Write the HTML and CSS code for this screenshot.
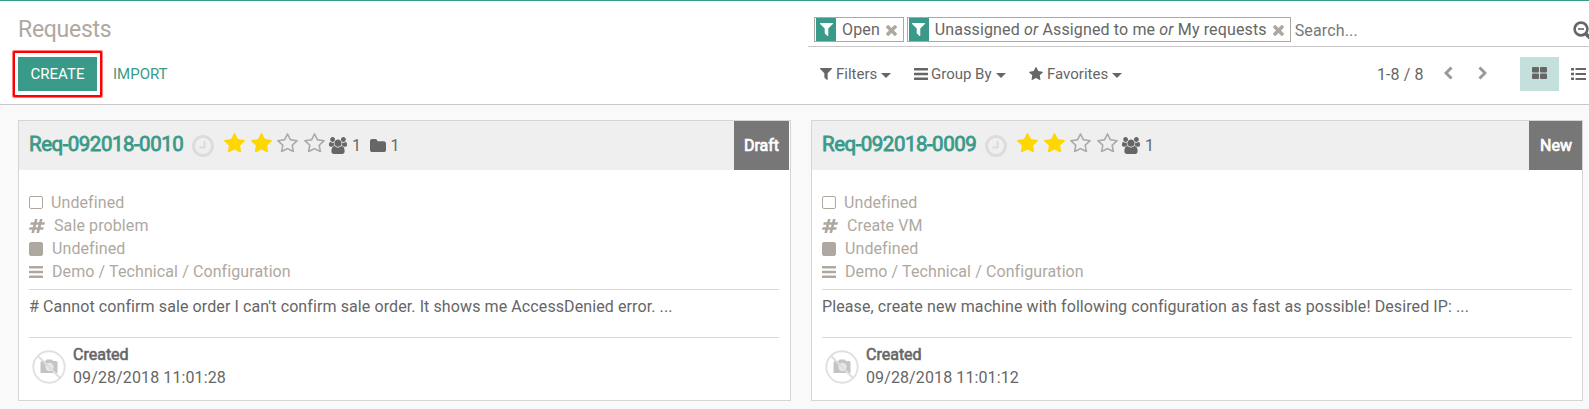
FILE: index.html
```html
<!DOCTYPE html>
<html lang="en">
<head>
<meta charset="utf-8">
<title>Requests</title>
<link rel="stylesheet" href="styles.css">
</head>
<body>
<svg class="sprite" aria-hidden="true">
  <symbol id="filter" viewBox="192 256 1408 1408" preserveAspectRatio="none"><path d="M1595 295q17 41-14 70l-493 493v742q0 42-39 59-13 5-25 5-27 0-45-19l-256-256q-19-19-19-45v-486l-493-493q-31-29-14-70 17-39 59-39h1280q42 0 59 39z"/></symbol>
  <symbol id="star" viewBox="64 32 1664 1588" preserveAspectRatio="none"><path d="M1728 647q0 22-26 48l-363 354 86 500q1 7 1 20 0 21-10.500 35.500t-30.500 14.500q-19 0-40-12l-449-236-449 236q-22 12-40 12-21 0-31.500-14.500t-10.500-35.500q0-6 2-20l86-500-364-354q-25-27-25-48 0-37 56-46l502-73 225-455q19-41 49-41t49 41l225 455 502 73q56 9 56 46z"/></symbol>
  <symbol id="star-o" viewBox="64 32 1664 1588" preserveAspectRatio="none"><path d="M1201 1004l306-297-422-62-189-382-189 382-422 62 306 297-73 421 378-199 377 199zm527-357q0 22-26 48l-363 354 86 500q1 7 1 20 0 50-41 50-19 0-40-12l-449-236-449 236q-22 12-40 12-21 0-31.500-14.500t-10.500-35.500q0-6 2-20l86-500-364-354q-25-27-25-48 0-37 56-46l502-73 225-455q19-41 49-41t49 41l225 455 502 73q56 9 56 46z"/></symbol>
  <symbol id="times" viewBox="302 366 1188 1188"><path d="M1490 1322q0 40-28 68l-136 136q-28 28-68 28t-68-28l-294-294-294 294q-28 28-68 28t-68-28l-136-136q-28-28-28-68t28-68l294-294-294-294q-28-28-28-68t28-68l136-136q28-28 68-28t68 28l294 294 294-294q28-28 68-28t68 28l136 136q28 28 28 68t-28 68l-294 294 294 294q28 28 28 68z"/></symbol>
  <symbol id="users" viewBox="0 0 1920 1792"><path d="M593 896q-162 5-265 128h-134q-82 0-138-40.500t-56-118.500q0-353 124-353 6 0 43.500 21t97.500 42.500 119 21.500q67 0 133-23-5 37-5 66 0 139 81 256zm1071 637q0 120-73 189.500t-194 69.500h-874q-121 0-194-69.500t-73-189.500q0-53 3.500-103.500t14-109 26.500-108.500 43-97.500 62-81 85.500-53.500 111.500-20q10 0 43 21.500t73 48 107 48 135 21.500 135-21.500 107-48 73-48 43-21.500q61 0 111.500 20t85.500 53.500 62 81 43 97.500 26.500 108.500 14 109 3.500 103.500zm-1024-1277q0 106-75 181t-181 75-181-75-75-181 75-181 181-75 181 75 75 181zm704 384q0 159-112.500 271.500t-271.500 112.500-271.500-112.500-112.500-271.500 112.500-271.500 271.500-112.500 271.500 112.500 112.500 271.500zm576 225q0 78-56 118.500t-138 40.500h-134q-103-123-265-128 81-117 81-256 0-29-5-66 66 23 133 23 59 0 119-21.500t97.500-42.500 43.500-21q124 0 124 353zm-128-609q0 106-75 181t-181 75-181-75-75-181 75-181 181-75 181 75 75 181z"/></symbol>
  <symbol id="folder" viewBox="64 128 1664 1408" preserveAspectRatio="none"><path d="M1728 608v704q0 92-66 158t-158 66h-1216q-92 0-158-66t-66-158v-960q0-92 66-158t158-66h320q92 0 158 66t66 158v32h672q92 0 158 66t66 158z"/></symbol>
  <symbol id="hash" viewBox="32 128 1728 1536" preserveAspectRatio="none"><path d="M991 1024l64-256h-254l-64 256h254zm768-504l-56 224q-7 24-31 24h-327l-64 256h311q15 0 25 12 10 14 6 28l-56 224q-5 24-31 24h-327l-81 328q-7 24-31 24h-224q-16 0-26-12-9-12-6-28l78-312h-254l-81 328q-7 24-31 24h-225q-15 0-25-12-9-12-6-28l78-312h-311q-15 0-25-12-9-12-6-28l56-224q7-24 31-24h327l64-256h-311q-15 0-25-12-10-14-6-28l56-224q5-24 31-24h327l81-328q7-24 32-24h224q15 0 25 12 9 12 6 28l-78 312h254l81-328q7-24 32-24h224q15 0 25 12 9 12 6 28l-78 312h311q15 0 25 12 9 12 6 28z"/></symbol>
  <symbol id="bars" viewBox="0 0 14 12" preserveAspectRatio="none"><path d="M.5 0h13a.5.5 0 0 1 .5.5v1.400a.5.5 0 0 1-.5.5H.5a.5.5 0 0 1-.5-.5V.5A.5.5 0 0 1 .5 0zM.5 4.800h13a.5.5 0 0 1 .5.5v1.400a.5.5 0 0 1-.5.5H.5a.5.5 0 0 1-.5-.5V5.300a.5.5 0 0 1 .5-.5zM.5 9.600h13a.5.5 0 0 1 .5.5v1.400a.5.5 0 0 1-.5.5H.5a.5.5 0 0 1-.5-.5v-1.400a.5.5 0 0 1 .5-.5z"/></symbol>
  <symbol id="clock" viewBox="0 0 22 22"><circle cx="11" cy="11" r="9.500" fill="none" stroke="currentColor" stroke-width="3"/><path d="M12.500 6v6.500h-5" fill="none" stroke="currentColor" stroke-width="2"/></symbol>
  <symbol id="camera" viewBox="0 0 34 34"><path d="M8.500 12.500q0-1.500 1.500-1.500h3.500l1-1.500h5.500l1 1.500h3q1.500 0 1.500 1.500v10.500h-17z" fill="#c4c4c4"/><circle cx="17.500" cy="17" r="4.200" fill="#e6e6e6"/><circle cx="17" cy="17" r="15.700" fill="none" stroke="#e0e0e0" stroke-width="1.900"/><path d="M6 6l22 22" stroke="#dedede" stroke-width="2"/></symbol>
</svg>

<header class="panel">
  <div class="left">
    <h1 class="title">Requests</h1>
    <div class="actions">
      <div class="highlight"><button class="create">CREATE</button></div>
      <span class="import">IMPORT</span>
    </div>
  </div>
  <div class="right">
    <div class="search">
      <div class="facet">
        <span class="facet-icon"><svg><use href="#filter"/></svg></span>
        <span class="facet-text">Open</span>
        <svg class="remove"><use href="#times"/></svg>
      </div>
      <div class="facet">
        <span class="facet-icon"><svg><use href="#filter"/></svg></span>
        <span class="facet-text">Unassigned <i>or</i> Assigned to me <i>or</i> My requests</span>
        <svg class="remove"><use href="#times"/></svg>
      </div>
      <span class="placeholder">Search...</span>
      <svg class="zoom" viewBox="0 0 17 18"><circle cx="8" cy="8" r="6.400" fill="none" stroke="currentColor" stroke-width="2.600"/><path d="M5 8h6" stroke="currentColor" stroke-width="1.600"/><path d="M12.500 12.500l5 5" stroke="currentColor" stroke-width="3.600"/></svg>
    </div>
    <div class="tools">
      <span class="menu filters"><svg class="i-filter"><use href="#filter"/></svg>Filters<b class="caret"></b></span>
      <span class="menu groups"><svg class="i-bars"><use href="#bars"/></svg>Group By<b class="caret"></b></span>
      <span class="menu favs"><svg class="i-star"><use href="#star"/></svg>Favorites<b class="caret"></b></span>
      <span class="pager">1-8 / 8</span>
      <svg class="chev prev" viewBox="0 0 9 14"><path d="M7.500 1.500L2 7l5.500 5.500"/></svg>
      <svg class="chev" viewBox="0 0 9 14"><path d="M1.500 1.500L7 7l-5.500 5.500"/></svg>
      <span class="view active"><svg class="i-grid" viewBox="0 0 15 12"><rect width="7" height="5.500" rx="1"/><rect x="8" width="7" height="5.500" rx="1"/><rect y="6.500" width="7" height="5.500" rx="1"/><rect x="8" y="6.500" width="7" height="5.500" rx="1"/></svg></span>
      <svg class="i-list" viewBox="0 0 15 12"><path d="M0 0h3v2.400H0zM4.500 0H15v2H4.500zM0 4.800h3v2.400H0zM4.500 5H15v2H4.500zM0 9.600h3V12H0zM4.500 10H15v2H4.500z"/></svg>
    </div>
  </div>
</header>

<main class="board">
  <article class="card first">
    <div class="head">
      <span class="name">Req-092018-0010</span>
      <svg class="clock"><use href="#clock"/></svg>
      <span class="stars"><svg class="on"><use href="#star"/></svg><svg class="on"><use href="#star"/></svg><svg><use href="#star-o"/></svg><svg><use href="#star-o"/></svg></span>
      <svg class="users"><use href="#users"/></svg><span class="count">1</span>
      <svg class="folder"><use href="#folder"/></svg><span class="count">1</span>
      <span class="status">Draft</span>
    </div>
    <div class="body">
      <ul class="meta">
        <li><span class="box"></span>Undefined</li>
        <li><svg class="hash"><use href="#hash"/></svg>Sale problem</li>
        <li><span class="box full"></span>Undefined</li>
        <li><svg class="lines"><use href="#bars"/></svg>Demo / Technical / Configuration</li>
      </ul>
      <p class="desc"># Cannot confirm sale order I can't confirm sale order. It shows me AccessDenied error. ...</p>
      <div class="foot">
        <svg class="avatar"><use href="#camera"/></svg>
        <div class="event"><span class="strong">Created</span><span>09/28/2018 11:01:28</span></div>
      </div>
    </div>
  </article>
  <article class="card">
    <div class="head">
      <span class="name">Req-092018-0009</span>
      <svg class="clock"><use href="#clock"/></svg>
      <span class="stars"><svg class="on"><use href="#star"/></svg><svg class="on"><use href="#star"/></svg><svg><use href="#star-o"/></svg><svg><use href="#star-o"/></svg></span>
      <svg class="users"><use href="#users"/></svg><span class="count">1</span>
      <span class="status new">New</span>
    </div>
    <div class="body">
      <ul class="meta">
        <li><span class="box"></span>Undefined</li>
        <li><svg class="hash"><use href="#hash"/></svg>Create VM</li>
        <li><span class="box full"></span>Undefined</li>
        <li><svg class="lines"><use href="#bars"/></svg>Demo / Technical / Configuration</li>
      </ul>
      <p class="desc">Please, create new machine with following configuration as fast as possible! Desired IP: ...</p>
      <div class="foot">
        <svg class="avatar"><use href="#camera"/></svg>
        <div class="event"><span class="strong">Created</span><span>09/28/2018 11:01:12</span></div>
      </div>
    </div>
  </article>
</main>
</body>
</html>
```
FILE: styles.css
```css
* { box-sizing: border-box; }
body { margin: 0; height: 409px; overflow: hidden; background: #f9f9f9; color: #666; font: 16px/23px Roboto, sans-serif; }
svg { flex: none; fill: currentColor; }
.sprite { position: absolute; width: 0; height: 0; }

.panel { display: flex; height: 105px; background: #fff; border-top: 1px solid #3a9a89; border-bottom: 1px solid #c8c8c8; }
.left { width: 808px; padding-left: 13px; }
.title { margin: 14px 0 0 5px; font-size: 23px; line-height: 30px; font-weight: 400; letter-spacing: -.28px; color: #afa8a0; }
.actions { display: flex; align-items: center; margin-top: 6px; gap: 11px; }
.highlight { padding: 4px 3px; border: 2px solid #f00; border-radius: 1px; box-shadow: 0 0 0 1px #ff8080; }
.create { display: block; width: 79px; height: 34px; padding: 0; border: 0; background: #3a9a89; color: #fff; font: 15px Roboto, sans-serif; }
.import { font-size: 15px; color: #3a9a89; }

.right { width: 781px; overflow: hidden; }
.search { display: flex; align-items: center; height: 46px; padding: 11px 0 0 6px; border-bottom: 1px solid #c8c8c8; }
.facet { display: flex; align-items: center; height: 25px; margin-right: 3px; padding-left: 1px; border: 1px solid #afa8a0; white-space: nowrap; }
.facet-icon { display: flex; align-items: center; justify-content: center; width: 20px; height: 23px; background: #3a9a89; color: #fff; }
.facet-icon svg { width: 13px; height: 13px; }
.facet-text { margin: 0 6px; letter-spacing: .135px; }
.remove { width: 11px; height: 11px; margin: 3px 6px 0 0; color: #afa8a0; }
.placeholder { color: #777; margin: 2px 0 0 1px; letter-spacing: .15px; }
.zoom { width: 17px; height: 18px; margin: 2px -1px 0 auto; }

.tools { display: flex; align-items: center; height: 34px; margin-top: 10px; padding-left: 12px; font-size: 15px; }
.menu { display: flex; align-items: center; white-space: nowrap; }
.caret { margin: 3px 0 0 4px; border: 5px solid transparent; border-top-color: #666; border-bottom: 0; }
.i-filter { width: 12px; height: 12px; margin-right: 4px; }
.i-bars { width: 14px; height: 12px; margin-right: 3px; }
.i-star { width: 14px; height: 13px; margin: 0 4px 2px 0; }
.filters { width: 94px; }
.groups { width: 115px; }
.favs { width: 348px; }
.pager { width: 67px; font-size: 16px; letter-spacing: .1px; white-space: nowrap; }
.chev { width: 9px; height: 14px; margin-bottom: 2px; fill: none; stroke: #999; stroke-width: 3; }
.prev { margin-right: 25px; }
.view { display: flex; align-items: center; justify-content: center; width: 39px; height: 34px; margin: 0 12px 0 33px; background: #c4e0dc; }
.i-grid { width: 15px; height: 12px; margin-bottom: 2px; }
.i-list { width: 15px; height: 12px; }

.board { display: flex; gap: 20px; padding: 15px 0 0 18px; }
.card { width: 772px; height: 281px; background: #fff; border: 1px solid #d5d5d5; }
.first { width: 773px; padding-right: 1px; }
.head { display: flex; align-items: center; height: 49px; padding-left: 10px; background: #efefef; }
.name { width: 163px; margin-bottom: 3px; font-size: 20.500px; letter-spacing: -.5px; color: #3a9a89; -webkit-text-stroke: .8px; white-space: nowrap; }
.clock { width: 22px; height: 22px; margin-top: 1px; color: #dcdcdc; }
.stars { display: flex; gap: 5.700px; margin: 0 4px 6px 10px; color: #aaa; }
.stars svg { width: 21px; height: 19.500px; }
.stars .on { color: #ffd700; }
.users { width: 18px; height: 17px; margin-right: 5px; }
.count { width: 17.500px; font-size: 16px; }
.folder { width: 16px; height: 13px; margin-right: 5px; }
.status { align-self: stretch; margin-left: auto; padding: 0 10px; line-height: 49px; background: #777; color: #fff; -webkit-text-stroke: .7px; }
.new { padding-left: 11px; }

.body { padding: 21px 10px 0; }
.meta { margin: 0; padding: 0 0 6px; list-style: none; color: #afa8a0; letter-spacing: .1px; border-bottom: 1px solid #d8d8d8; }
.meta li { display: flex; align-items: center; height: 23px; }
.box { width: 13.500px; height: 13px; margin-right: 8.500px; border: 1px solid #afa8a0; border-radius: 2px; }
.full { width: 14px; height: 14px; margin-right: 9px; background: #afa8a0; }
.hash { width: 16px; height: 14px; margin-right: 9px; }
.lines { width: 14px; height: 12px; margin-right: 9px; }
.desc { height: 47px; margin: 0; padding-top: 5px; letter-spacing: .097px; white-space: nowrap; }
.foot { display: flex; padding-top: 5px; border-top: 1px solid #d8d8d8; }
.avatar { width: 34px; height: 34px; margin: 7px 7px 0 3px; }
.event { display: flex; flex-direction: column; letter-spacing: .11px; }
.strong { letter-spacing: 0; -webkit-text-stroke: .6px; }
```
